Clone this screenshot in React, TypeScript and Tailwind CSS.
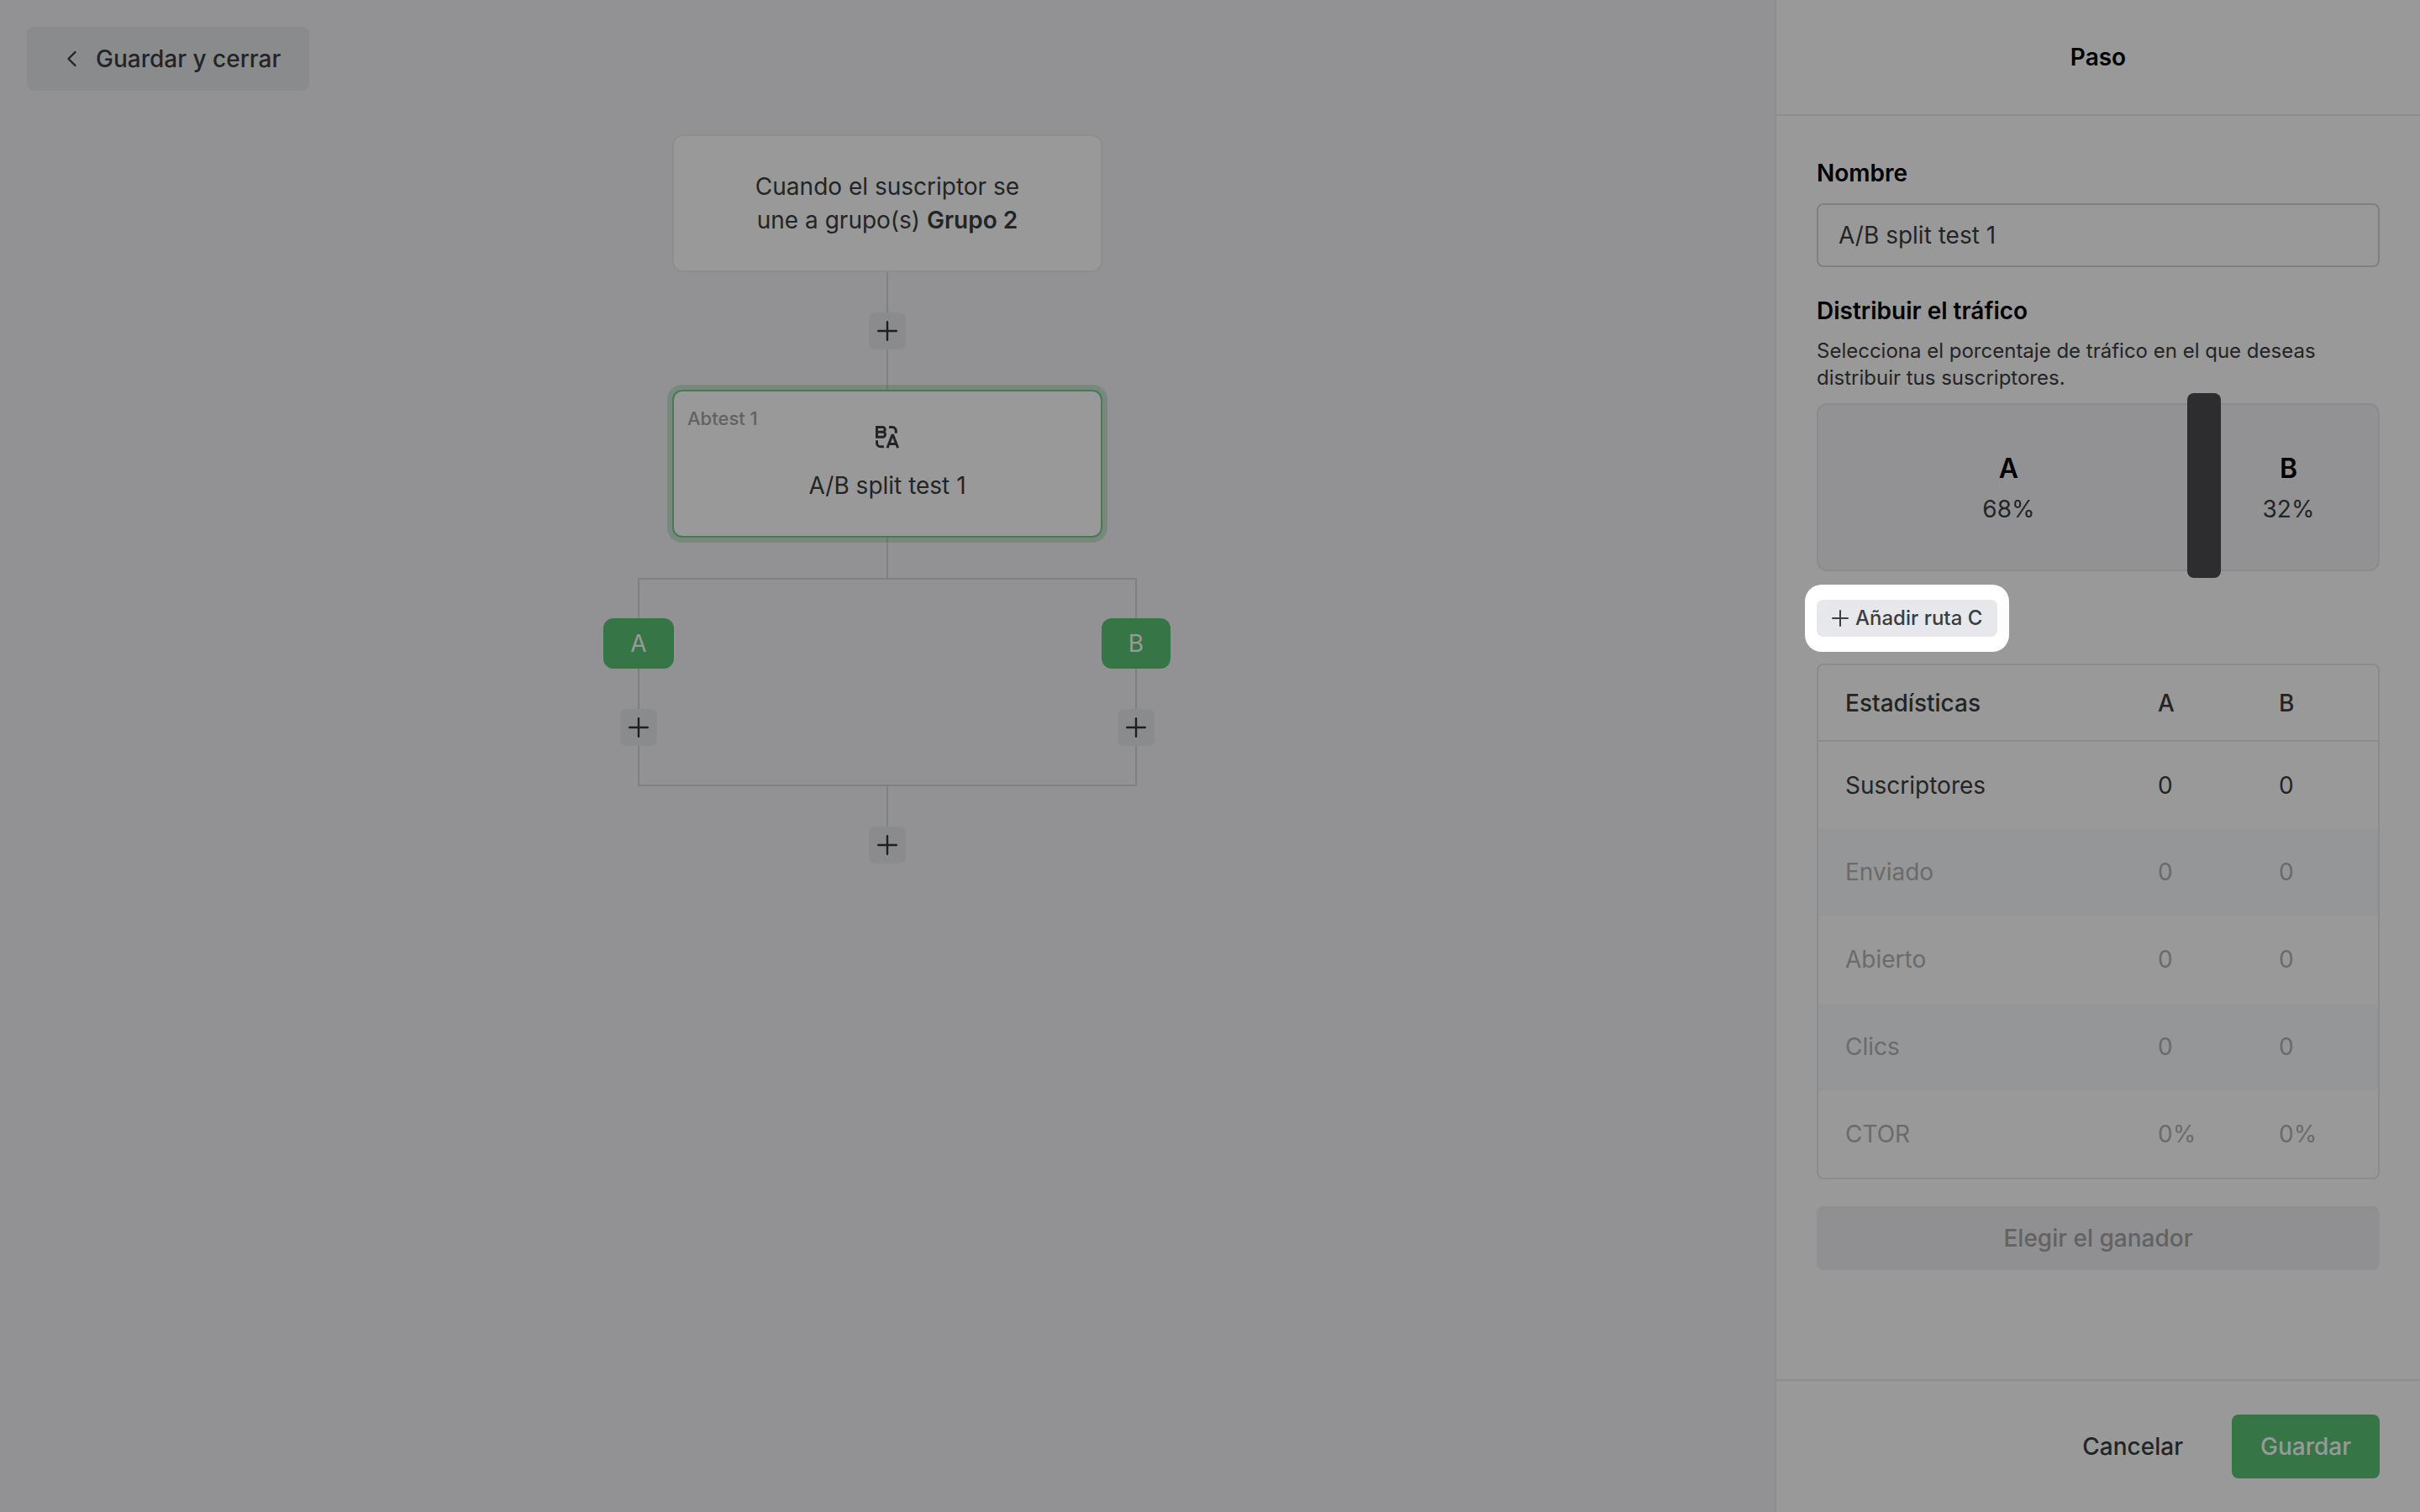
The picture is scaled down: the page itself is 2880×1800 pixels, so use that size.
const stats = [
  { label: "Suscriptores", a: "0", b: "0" },
  { label: "Enviado", a: "0", b: "0" },
  { label: "Abierto", a: "0", b: "0" },
  { label: "Clics", a: "0", b: "0" },
  { label: "CTOR", a: "0%", b: "0%" },
];

function PlusIcon({ className }: { className: string }) {
  return (
    <svg viewBox="0 0 24 24" className={className} fill="none" stroke="currentColor" strokeWidth="2.4" strokeLinecap="round" aria-hidden="true">
      <path d="M12 1.200v21.600M1.200 12h21.600" />
    </svg>
  );
}

function BackIcon() {
  return (
    <svg viewBox="0 0 28 28" className="size-7" fill="none" stroke="currentColor" strokeWidth="2.4" strokeLinecap="round" strokeLinejoin="round" aria-hidden="true">
      <path d="M17.500 6l-8 8 8 8" />
    </svg>
  );
}

function SplitIcon() {
  return (
    <svg viewBox="0 0 28 28" className="size-7" fill="none" stroke="currentColor" strokeWidth="3" aria-hidden="true">
      <path d="M1.500 2.500h6.800a2.900 2.900 0 0 1 0 5.800h-6.800zM1.500 8.300h7a3 3 0 0 1 0 6h-7z" />
      <path d="M16 2.500h4a4.300 4.300 0 0 1 4.300 4.300v3M1.500 18.200v3a4.600 4.600 0 0 0 4.600 4.600h3.800" />
      <path d="M14 27.200l5.800-15h1l5.800 15M16.500 22.400h7.600" />
    </svg>
  );
}

function AddStep() {
  return (
    <button type="button" aria-label="Añadir paso" className="flex size-11 items-center justify-center rounded-lg bg-[#e6e8eb] text-[#303236]">
      <PlusIcon className="size-6" />
    </button>
  );
}

function Connector({ className = "h-12" }: { className?: string }) {
  return <div className={`w-0.5 bg-[#d5d6d8] ${className}`} />;
}

function Branch({ name }: { name: string }) {
  return (
    <div className="flex flex-col items-center">
      <Connector className="h-[46px]" />
      <div className="flex h-15 items-center rounded-xl bg-[#5bc375] px-8 text-[28px] text-white">{name}</div>
      <Connector />
      <AddStep />
      <Connector className="h-[46px]" />
    </div>
  );
}

function Canvas() {
  return (
    <main className="relative flex flex-1 flex-col items-center bg-[#f4f4f7] pt-40">
      <button type="button" className="absolute top-8 left-8 flex h-19 items-center gap-3.5 rounded-lg bg-[#e6e8eb] pr-8.5 pl-10 text-[28px] font-medium">
        <BackIcon />
        Guardar y cerrar
      </button>

      <div className="flex h-41 w-lg items-center justify-center rounded-xl border-2 border-[#ececee] bg-white px-20 text-center text-[28px] leading-10">
        <p>
          Cuando el suscriptor se
          <br />
          une a grupo(s) <b className="font-semibold">Grupo 2</b>
        </p>
      </div>
      <Connector />
      <AddStep />
      <Connector />
      <div className="relative flex h-44 w-lg flex-col items-center gap-6 rounded-xl border-2 border-[#7fc894] bg-white pt-10 text-[28px] leading-10 ring-6 ring-[#5bc375]/30">
        <span className="absolute top-4 left-4 text-[22px] leading-8 font-medium text-[#a3a3a3]">Abtest 1</span>
        <SplitIcon />
        <p>A/B split test 1</p>
      </div>
      <Connector />

      <div className="flex w-[594px] justify-between border-y-2 border-[#d5d6d8]">
        <div className="flex w-0.5 justify-center">
          <Branch name="A" />
        </div>
        <div className="flex w-0.5 justify-center">
          <Branch name="B" />
        </div>
      </div>
      <Connector />
      <AddStep />
    </main>
  );
}

function StatsTable() {
  return (
    <div className="mt-3.5 overflow-hidden rounded-lg border-2 border-[#e8e8ea]">
      <table className="w-full table-fixed text-left">
        <colgroup>
          <col />
          <col className="w-36" />
          <col className="w-[150px]" />
        </colgroup>
        <thead>
          <tr className="h-[90px] border-b-2 border-[#e8e8ea]">
            <th className="px-8 font-medium">Estadísticas</th>
            <th className="px-8 font-medium">A</th>
            <th className="px-8 font-medium">B</th>
          </tr>
        </thead>
        <tbody>
          {stats.map((row) => (
            <tr key={row.label} className="h-26 text-[#b3b3b3] first:text-[#3b3d42] even:bg-[#f9fafc]">
              <td className="px-8">{row.label}</td>
              <td className="px-8">{row.a}</td>
              <td className="px-8">{row.b}</td>
            </tr>
          ))}
        </tbody>
      </table>
    </div>
  );
}

function TrafficSplit({ share }: { share: number }) {
  return (
    <div className="relative mt-3.5 flex h-50 rounded-xl border-2 border-[#e8e8ea] bg-[#f4f4f7] pt-1 text-center">
      <div className="flex flex-col justify-center" style={{ width: `${share}%` }}>
        <span className="text-[32px] leading-12 font-semibold text-black">A</span>
        <span className="leading-12">{share}%</span>
      </div>
      <div className="flex flex-1 flex-col justify-center">
        <span className="text-[32px] leading-12 font-semibold text-black">B</span>
        <span className="leading-12">{100 - share}%</span>
      </div>
      <div className="absolute -top-3.5 -ml-3.5 h-55 w-10 rounded-lg bg-[#4b4b4f]" style={{ left: `${share}%` }} />
    </div>
  );
}

function StepPanel() {
  return (
    <aside className="flex w-3xl flex-col border-l-2 border-[#ececee] bg-white">
      <header className="flex h-[138px] items-center justify-center border-b-2 border-[#ececee]">
        <h1 className="font-semibold text-black">Paso</h1>
      </header>

      <div className="flex-1 px-12 pt-12">
        <label htmlFor="nombre" className="block leading-10 font-semibold text-black">
          Nombre
        </label>
        <input id="nombre" defaultValue="A/B split test 1" className="mt-4 block h-19 w-full rounded-lg border-2 border-[#d5d6d8] px-6" />

        <h2 className="mt-8 leading-10 font-semibold text-black">Distribuir el tráfico</h2>
        <p className="mt-3 text-[24px] leading-8">Selecciona el porcentaje de tráfico en el que deseas distribuir tus suscriptores.</p>
        <TrafficSplit share={68} />

        {/* spotlight: the spread shadow dims everything around the button */}
        <div className="relative z-10 mt-4 -ml-3.5 flex w-fit rounded-[20px] bg-white px-3.5 py-[18px] shadow-[0_0_0_4000px_rgba(0,0,0,0.4)]">
          <button type="button" className="flex h-11 items-center gap-2 rounded-lg bg-[#e6e8eb] px-4.5 text-[24px] font-medium">
            <PlusIcon className="size-5" />
            Añadir ruta C
          </button>
        </div>

        <StatsTable />

        <button type="button" disabled className="mt-8 h-19 w-full rounded-lg bg-[#f0f1f3] font-medium text-[#a3a3a6]">
          Elegir el ganador
        </button>
      </div>

      <footer className="flex h-[158px] items-center justify-end gap-6 border-t-2 border-[#ececee] px-12 font-medium">
        <button type="button" className="h-19 px-8.5">Cancelar</button>
        <button type="button" className="h-19 rounded-lg bg-[#5bc375] px-8.5 text-white">Guardar</button>
      </footer>
    </aside>
  );
}

export default function App() {
  return (
    <div className="flex min-h-screen overflow-hidden font-[Inter,sans-serif] text-[28px] text-[#3b3d42]">
      <Canvas />
      <StepPanel />
    </div>
  );
}
